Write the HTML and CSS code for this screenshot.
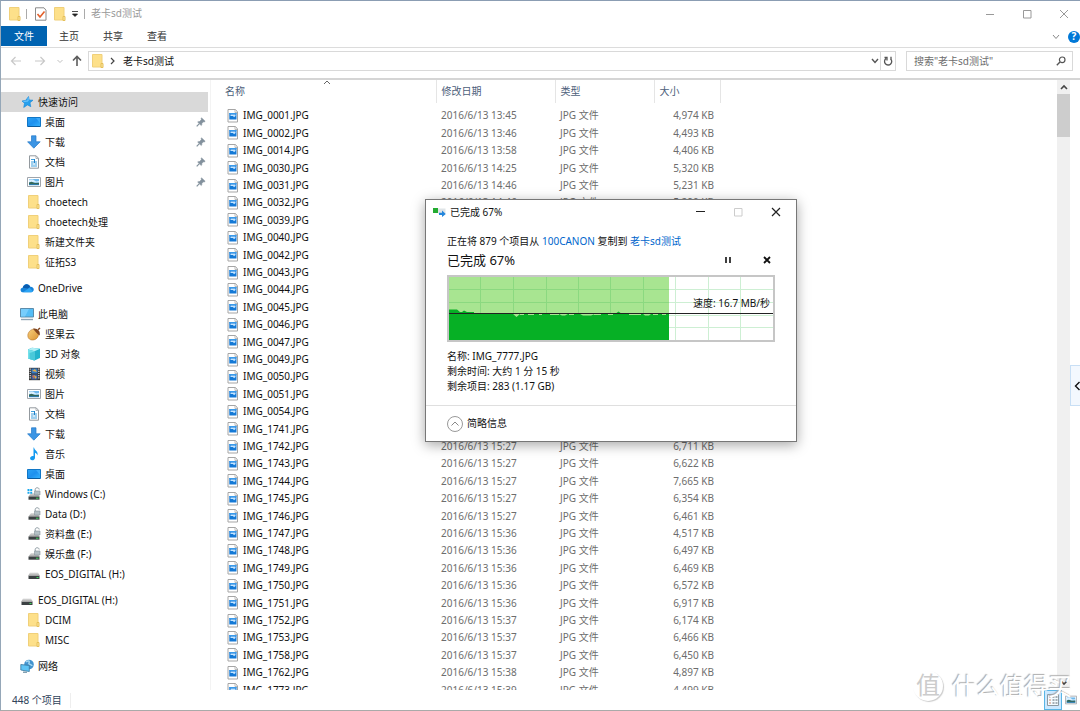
FILE: index.html
```html
<!DOCTYPE html>
<html lang="zh-CN">
<head>
<meta charset="utf-8">
<title>老卡sd测试</title>
<link rel="stylesheet" href="styles.css">
</head>
<body>
<svg class="sprite" aria-hidden="true">
  <defs>
    <linearGradient id="gBlue" x1="0" y1="0" x2="1" y2="1"><stop offset="0" stop-color="#2ba4f5"/><stop offset=".5" stop-color="#1e90ee"/><stop offset="1" stop-color="#35b5ff"/></linearGradient>
    <linearGradient id="gNut" x1="0" y1="0" x2="1" y2="1"><stop offset="0" stop-color="#f7cf7c"/><stop offset="1" stop-color="#dc9433"/></linearGradient>
    <linearGradient id="gDrive" x1="0" y1="0" x2="0" y2="1"><stop offset="0" stop-color="#e2e2e2"/><stop offset="1" stop-color="#9d9d9d"/></linearGradient>
  </defs>
  <symbol id="folder" viewBox="0 0 14 14"><path d="M1.500.5h9.500v12.500h-9.500z" fill="#fde08a" stroke="#f0d07a"/><path d="M10 9.500h2v4h-2z" fill="#fbe79f" stroke="#e6c05a"/></symbol>
  <symbol id="star" viewBox="0 0 14 14"><path d="M8.500 1.500l.7 3.500 3.800.2-3 2.500.8 4-3.300-1.800-3.800 2.600.8-4.200L2 6l3.800-.7z" fill="#27a0ed" stroke="#1287d8" stroke-width=".6"/><path d="M8.200 2.500L8 6l-4.500.4" fill="none" stroke="#77caff"/></symbol>
  <symbol id="desktop" viewBox="0 0 14 14"><path d="M.5 2.500h13v9H.5z" fill="url(#gBlue)" stroke="#1177c6"/><path d="M1 11.500h12" stroke="#0b5c9e"/><path d="M9 3h4v5z" fill="#51bbff" opacity=".6"/></symbol>
  <symbol id="download" viewBox="0 0 14 14"><path d="M4.500.8h4.500v6h4.200L6.800 13.200.6 6.800h3.900z" fill="#3c95e4" stroke="#2479c8" stroke-width=".7"/></symbol>
  <symbol id="doc" viewBox="0 0 14 14"><path d="M2.500.8h6.700l2.300 2.500v9.900h-9z" fill="#fff" stroke="#93999e"/><path d="M9 1v2.500h2.500" fill="none" stroke="#93999e" stroke-width=".7"/><path d="M4 4.500h3M4 7h6M4 9h2.500M7.500 9H10M4 11h6" stroke="#3fa0de" stroke-width="1.200"/><path d="M7.500 4v4" stroke="#2081ca"/></symbol>
  <symbol id="picture" viewBox="0 0 14 14"><path d="M.5 2.500h13v9H.5z" fill="#fff" stroke="#a0a5ab"/><path d="M2 4h10v6H2z" fill="#6eb8ec"/><path d="M2 4.500h4l3 2 3-.5v1.500H2z" fill="#d9efff"/><path d="M2 7.500l2.500-.8L8 8l4-.3V10H2z" fill="#36695b"/><path d="M2 9.200h10v1H2z" fill="#2c80be"/></symbol>
  <symbol id="onedrive" viewBox="0 0 14 14"><path d="M3.400 11.300C-.2 11.300-.3 7 2.700 6.800 3.500 2.500 8.600 1.700 10.200 5.800c4.300-.4 4.800 5 1 5.500z" fill="#1683da"/><path d="M2.700 6.800C3.700 3 8.500 2 10.200 5.800L8 7.500z" fill="#0b5cae"/><path d="M3 11.200l6.500-4.500 3.500 3.500c-.5.8-1 1-1.800 1.100z" fill="#2da4f4"/></symbol>
  <symbol id="pc" viewBox="0 0 14 14"><path d="M.5 1.500h13v8.500H.5z" fill="#55bdf6" stroke="#5b8cab"/><path d="M1 2h8L5 9.500H1z" fill="#86d4ff" opacity=".7"/><path d="M1 12.500h12" stroke="#8fa3b3" stroke-width="1.400"/></symbol>
  <symbol id="nut" viewBox="0 0 14 14"><path d="M1 7C2 3.500 5 2 7.500 2.200l3.800 4.500C12 10 9 13 5.500 13 2 13 .3 10.500 1 7z" fill="url(#gNut)" stroke="#b97627" stroke-width=".6"/><path d="M6 1.800C9.500.5 14 4 12.600 8.600 11 7.500 8.500 5 6 1.800z" fill="#814620"/><path d="M11 2.700l2-1.700" stroke="#814620" stroke-width="1.500"/></symbol>
  <symbol id="cube" viewBox="0 0 14 14"><path d="M1 2.500L5 .8l8 1V11l-5.500 2.500L1 11.500z" fill="#24b3cc"/><path d="M1 2.500L5 .8l8 1-5.500 2.400z" fill="#b2eff6"/><path d="M1 2.500l6.500 1.700v9.300l-6.500-2z" fill="#74e0ea"/><path d="M2.500 6l5-1.500v9l-5-1.500z" fill="#49c9da"/></symbol>
  <symbol id="video" viewBox="0 0 14 14"><path d="M2 .8h11v12.400H2z" fill="#373737"/><path d="M4.500 1.500h6v5h-6z" fill="#347bc6"/><path d="M4.500 7.500h6v5h-6z" fill="#3d65a9"/><path d="M5 4l3-2 2 3zM7 8l3 2-2 2z" fill="#e9ae44"/><path d="M5 9l2-1v4z" fill="#cf6b4b"/><path d="M3.200 1.500v11M11.800 1.500v11" stroke="#ddd" stroke-width="1.200" stroke-dasharray="1.200 1"/></symbol>
  <symbol id="music" viewBox="0 0 14 14"><path d="M7 .5c.5 3 4.500 3.500 3.500 8-.5-2-2-2.500-2.500-2.800v5c0 1.500-1.200 2.600-2.800 2.600-3.200 0-2.500-4.200.5-4.200.4 0 .6 0 .8.2V.5z" fill="#149af0"/></symbol>
  <symbol id="usb" viewBox="0 0 14 14"><path d="M3 5.500h8l2 3.500H1z" fill="url(#gDrive)"/><path d="M1.500 9h11v3h-11z" fill="#3c4143"/><path d="M9.500 10.500h2" stroke="#3ad65c"/></symbol>
  <symbol id="drive" viewBox="0 0 14 14"><path d="M4 6h6.500l2 3.500h-11z" fill="url(#gDrive)"/><path d="M1.500 9.500h11v3.200h-11z" fill="#3c4143"/><path d="M9 11.200h2.500" stroke="#3ad65c"/><path d="M8.200 4V2.500c0-2.300 4-2.300 4 0" fill="none" stroke="#8a979f"/><path d="M7.500 4h5.500v4H7.500z" fill="#b5c0c5" stroke="#84929a" stroke-width=".6"/></symbol>
  <symbol id="windrive" viewBox="0 0 14 14"><use href="#drive"/><path d="M.5 2h2v2h-2zM3.200 2h2v2h-2zM.5 4.800h2v2h-2zM3.200 4.800h2v2h-2z" fill="#18a8ee"/></symbol>
  <symbol id="network" viewBox="0 0 14 14"><circle cx="9" cy="5.500" r="4.800" fill="#4394cf"/><path d="M6 3c2-2 4-1 3 1s3 1 3 3" fill="none" stroke="#a6d7f1" stroke-width="1.500"/><path d="M.8 5.500l8.500 1v6l-8.500-1.500z" fill="#5fc4f5" stroke="#38789f" stroke-width=".8"/><path d="M3 13.200h4" stroke="#668ba0" stroke-width="1.200"/></symbol>
  <symbol id="pin" viewBox="0 0 10 10"><path d="M5.500.8l3.700 3.500-1 .7-.6-.2-1.800 1.800c.2 1 0 1.500-.5 2L1.600 5c.6-.6 1.200-.7 2-.5l1.800-1.900-.3-.8z" fill="#83919d" stroke="#83919d" stroke-width=".5"/><path d="M3.400 6.600L.7 9.300" stroke="#83919d" stroke-width="1.200"/></symbol>
  <symbol id="jpg" viewBox="0 0 12 14"><path d="M1 .5h7.500L10.500 3v10H1z" fill="#fff" stroke="#a5a5a5"/><path d="M8 1v2.500h2.500" fill="none" stroke="#a5a5a5" stroke-width=".7"/><path d="M2.300 4h7.200v6.500H2.300z" fill="#1479d6"/><path d="M3.500 5.500h5V7L7 8.200 6 7H3.500z" fill="#c4e5ff"/><path d="M2.300 4.500h7.200" stroke="#3a9bec"/></symbol>
</svg>

<div class="window">
  <header class="titlebar">
    <svg class="i14"><use href="#folder"/></svg>
    <span class="rule"></span>
    <button class="bare" aria-label="属性"><svg class="i14" viewBox="0 0 14 14"><path d="M1.500.8h8.500l2 2.400v10H1.500z" fill="#fff" stroke="#8b8b8b"/><path d="M3.500 7l2.500 3 4.500-5.500" fill="none" stroke="#e3602b" stroke-width="1.600"/></svg></button>
    <button class="bare" aria-label="新建文件夹"><svg class="i14"><use href="#folder"/></svg></button>
    <button class="bare custom" aria-label="自定义快速访问工具栏"><svg width="8" height="8" viewBox="0 0 8 8"><path d="M1 1.500h6M1.500 4h5L4 6.500z" fill="#222" stroke="#222" stroke-width=".8"/></svg></button>
    <span class="rule"></span>
    <span class="caption">老卡sd测试</span>
    <div class="winbtns">
      <button aria-label="最小化"><svg width="10" height="10"><path d="M1 5.500h8" stroke="#999"/></svg></button>
      <button aria-label="最大化"><svg width="10" height="10"><path d="M1.500 1.500h7.500v7.500h-7.500z" fill="none" stroke="#999"/></svg></button>
      <button aria-label="关闭"><svg width="10" height="10"><path d="M1 1l8 8M9 1L1 9" stroke="#999"/></svg></button>
    </div>
  </header>

  <nav class="tabs">
    <button class="tab file">文件</button>
    <button class="tab">主页</button>
    <button class="tab">共享</button>
    <button class="tab">查看</button>
    <div class="tabtools">
      <button class="bare" aria-label="展开功能区"><svg width="8" height="6"><path d="M1 1l3 3.500L7 1" fill="none" stroke="#888"/></svg></button>
      <button class="bare help" aria-label="帮助">?</button>
    </div>
  </nav>

  <div class="addressbar">
    <div class="history">
      <button class="bare" aria-label="后退"><svg width="12" height="10"><path d="M11 5H1.500M5.500 1l-4 4 4 4" fill="none" stroke="#c8c8c8" stroke-width="1.200"/></svg></button>
      <button class="bare" aria-label="前进"><svg width="12" height="10"><path d="M1 5h9.500M6.500 1l4 4-4 4" fill="none" stroke="#c8c8c8" stroke-width="1.200"/></svg></button>
      <button class="bare narrow" aria-label="最近浏览的位置"><svg width="6" height="5"><path d="M.5 1L3 3.500 5.500 1" fill="none" stroke="#c0c0c0"/></svg></button>
      <button class="bare narrow" aria-label="上移"><svg width="10" height="12"><path d="M5 11V1.500M1 5.500l4-4 4 4" fill="none" stroke="#5c5c5c" stroke-width="1.600"/></svg></button>
    </div>
    <div class="path">
      <svg class="i14"><use href="#folder"/></svg>
      <svg width="6" height="8"><path d="M1 1l3 3-3 3" fill="none" stroke="#444" stroke-width="1.200"/></svg>
      <button class="bare crumb">老卡sd测试</button>
      <button class="bare drop" aria-label="以前的位置"><svg width="8" height="6"><path d="M1 1l3 3.500L7 1" fill="none" stroke="#555" stroke-width="1.400"/></svg></button>
      <button class="bare refresh" aria-label="刷新"><svg width="10" height="10"><path d="M3 2.500a3.600 3.600 0 1 0 4.500.2M1.500 1.500H4v3M8 .8V4" fill="none" stroke="#555" stroke-width="1.300"/></svg></button>
    </div>
    <div class="search">
      <input type="text" aria-label="搜索" placeholder='搜索"老卡sd测试"'>
      <svg width="10" height="10"><circle cx="6.200" cy="3.800" r="2.800" fill="none" stroke="#555" stroke-width="1.200"/><path d="M4 6L.8 9.200" stroke="#555" stroke-width="1.400"/></svg>
    </div>
  </div>

  <div class="body">
    <nav class="tree">
      <ul>
        <li class="root selected"><svg class="i14"><use href="#star"/></svg>快速访问</li>
        <li><svg class="i14"><use href="#desktop"/></svg>桌面<svg class="pin"><use href="#pin"/></svg></li>
        <li><svg class="i14"><use href="#download"/></svg>下载<svg class="pin"><use href="#pin"/></svg></li>
        <li><svg class="i14"><use href="#doc"/></svg>文档<svg class="pin"><use href="#pin"/></svg></li>
        <li><svg class="i14"><use href="#picture"/></svg>图片<svg class="pin"><use href="#pin"/></svg></li>
        <li><svg class="i14"><use href="#folder"/></svg>choetech</li>
        <li><svg class="i14"><use href="#folder"/></svg>choetech处理</li>
        <li><svg class="i14"><use href="#folder"/></svg>新建文件夹</li>
        <li><svg class="i14"><use href="#folder"/></svg>征拓S3</li>
      </ul>
      <ul>
        <li class="root"><svg class="i14"><use href="#onedrive"/></svg>OneDrive</li>
      </ul>
      <ul>
        <li class="root"><svg class="i14"><use href="#pc"/></svg>此电脑</li>
        <li><svg class="i14"><use href="#nut"/></svg>坚果云</li>
        <li><svg class="i14"><use href="#cube"/></svg>3D 对象</li>
        <li><svg class="i14"><use href="#video"/></svg>视频</li>
        <li><svg class="i14"><use href="#picture"/></svg>图片</li>
        <li><svg class="i14"><use href="#doc"/></svg>文档</li>
        <li><svg class="i14"><use href="#download"/></svg>下载</li>
        <li><svg class="i14"><use href="#music"/></svg>音乐</li>
        <li><svg class="i14"><use href="#desktop"/></svg>桌面</li>
        <li><svg class="i14"><use href="#windrive"/></svg>Windows (C:)</li>
        <li><svg class="i14"><use href="#drive"/></svg>Data (D:)</li>
        <li><svg class="i14"><use href="#drive"/></svg>资料盘 (E:)</li>
        <li><svg class="i14"><use href="#drive"/></svg>娱乐盘 (F:)</li>
        <li><svg class="i14"><use href="#usb"/></svg>EOS_DIGITAL (H:)</li>
      </ul>
      <ul>
        <li class="root"><svg class="i14"><use href="#usb"/></svg>EOS_DIGITAL (H:)</li>
        <li><svg class="i14"><use href="#folder"/></svg>DCIM</li>
        <li><svg class="i14"><use href="#folder"/></svg>MISC</li>
      </ul>
      <ul>
        <li class="root"><svg class="i14"><use href="#network"/></svg>网络</li>
      </ul>
    </nav>

    <main class="files">
      <table>
        <colgroup><col class="c-name"><col class="c-date"><col class="c-type"><col class="c-size"></colgroup>
        <thead>
          <tr><th class="sorted">名称<svg class="caret" width="8" height="5"><path d="M1 4l3-3 3 3" fill="none" stroke="#666"/></svg></th><th>修改日期</th><th>类型</th><th>大小</th></tr>
        </thead>
        <tbody id="rows"></tbody>
      </table>
    </main>

    <div class="scrollbar" aria-hidden="true">
      <svg width="13" height="14"><path d="M4 9l3-3 3 3" fill="none" stroke="#444" stroke-width="1.600"/></svg>
      <span class="thumb"></span>
      <svg class="down" width="13" height="14"><path d="M4 5l3 3 3-3" fill="none" stroke="#444" stroke-width="1.600"/></svg>
    </div>
  </div>

  <footer class="status">
    <span class="count">448 个项目</span>
    <div class="views">
      <button class="active" aria-label="详细信息"><svg width="14" height="14" viewBox="0 0 14 14"><path d="M1.500 1.500h11v11h-11z" fill="#f4fbff" stroke="#8c9aa3"/><path d="M3 4h2M3 7h2M3 10h2" stroke="#d28468"/><path d="M6.500 4h2M9.500 4h2M6.500 7h2M9.500 7h2M6.500 10h2M9.500 10h2" stroke="#56656e"/></svg></button>
      <button aria-label="大图标"><svg width="12" height="12"><use href="#picture"/></svg></button>
    </div>
  </footer>

  <button class="sidetab" aria-label="展开侧栏"><svg width="6" height="10"><path d="M5.500 1l-4 4 4 4" fill="none" stroke="#111" stroke-width="1.400"/></svg></button>

  <div class="watermark"><span class="seal">值</span><span>什么值得买</span></div>

  <section class="dialog" role="dialog" aria-label="已完成 67%">
    <div class="dtitle">
      <svg width="13" height="10" viewBox="0 0 13 10"><path d="M0 1h5v5H0z" fill="#23ab31"/><path d="M5 1.500h7.500v5H5z" fill="#dfe4e7"/><path d="M6 5.800h3V3.500L12.800 7 9 10V8H6z" fill="#2486dc"/></svg>
      <span>已完成 67%</span>
      <div class="winbtns">
        <button aria-label="最小化"><svg width="10" height="10"><path d="M1 4.500h9" stroke="#222"/></svg></button>
        <button aria-label="最大化" disabled><svg width="10" height="10"><path d="M1.500 1.500h7.500v7.500h-7.500z" fill="none" stroke="#ccc"/></svg></button>
        <button aria-label="关闭"><svg width="10" height="10"><path d="M1 1l8 8M9 1L1 9" stroke="#222" stroke-width="1.200"/></svg></button>
      </div>
    </div>
    <div class="dbody">
      <p>正在将 879 个项目从 <a href="#">100CANON</a> 复制到 <a href="#">老卡sd测试</a></p>
      <div class="headline">
        <h2>已完成 67%</h2>
        <button class="bare" aria-label="暂停"><svg width="8" height="8"><path d="M2 1v6M6 1v6" stroke="#111" stroke-width="1.600"/></svg></button>
        <button class="bare" aria-label="取消"><svg width="8" height="8"><path d="M1 1l6 6M7 1L1 7" stroke="#111" stroke-width="1.800"/></svg></button>
      </div>
      <div class="chart">
        <svg viewBox="0 0 324 63" preserveAspectRatio="none">
          <path d="M0 0h220v63H0z" fill="#a8e591"/>
          <path d="M31.500 0v63M64.500 0v63M97.500 0v63M129.500 0v63M161.500 0v63M194.500 0v63M0 12.500h220M0 25.500h220" stroke="#8bd980"/>
          <path d="M226.500 0v63M259.500 0v63M291.500 0v63M220 12.500h104M220 25.500h104M220 38.500h104M220 50.500h104" stroke="#cdefd3"/>
          <path d="M0 32.500H8L11 35H13L15 33.500 18 35H25V37H64L67.500 40 71 37H110L113 38.500H116L119 37H131L134 38.500H142L146 37H166L169.500 34.500 173 37H194L196 38.500H200L202 37H220V63H0z" fill="#06b025"/>
          <path d="M71 37.500h4M79 37.500h6M90 37.500h3M101 37.500h9M120 37.500h5M145 37.500h7M159 37.500h5M180 37.500h12M204 37.500h5M213 37.500h4" stroke="#a8e591"/>
          <path d="M0 36.500h324" stroke="#222"/>
        </svg>
        <span class="speed">速度: 16.7 MB/秒</span>
      </div>
      <p>名称: IMG_7777.JPG</p>
      <p>剩余时间: 大约 1 分 15 秒</p>
      <p>剩余项目: 283 (1.17 GB)</p>
    </div>
    <div class="dfoot">
      <button class="bare less"><svg width="16" height="16"><circle cx="8" cy="8" r="7.500" fill="#fff" stroke="#999"/><path d="M4.500 9.500L8 6l3.500 3.500" fill="none" stroke="#888"/></svg>简略信息</button>
    </div>
  </section>
</div>
<script src="files.js"></script>
</body>
</html>
```

FILE: styles.css
```css
* { box-sizing: border-box; }

body {
  margin: 0;
  font: 10px/15px "Noto Sans", "Noto Sans CJK SC", sans-serif;
  color: #111;
  background: #fff;
}

button, input { font: inherit; color: inherit; }
button { padding: 0; border: 0; background: none; display: flex; align-items: center; justify-content: center; }
p, h2, ul { margin: 0; padding: 0; }
svg { flex: none; display: block; }
.sprite { position: absolute; width: 0; height: 0; }
.i14 { width: 14px; height: 14px; }

.window {
  position: relative;
  height: 100vh;
  display: flex;
  flex-direction: column;
  overflow: hidden;
  border-top: 1px solid #8b9db3;
  border-bottom: 1px solid #a9aaa9;
  border-left: 1px solid #95a7b8;
}

.titlebar { display: flex; align-items: center; height: 25px; padding-left: 7px; flex: none; }
.titlebar .rule { width: 1px; height: 10px; margin: 0 7px 0 4px; background: #aaa; }
.titlebar .bare + .bare { margin-left: 5px; }
.titlebar .bare + .custom { margin-left: 4px; }
.titlebar .custom + .rule { margin: 0 6px 0 5px; }
.caption { color: #999; }
.winbtns { display: flex; margin-left: auto; }
.winbtns button { width: 37px; height: 24px; }
.titlebar .winbtns { margin-right: -2px; }

.tabs { display: flex; flex: none; height: 22px; border-bottom: 1px solid #dcdcdc; color: #333; }
.tab { width: 44px; height: 20px; }
.tab.file { width: 46px; background: #0063b1; color: #fff; }
.tabtools { display: flex; align-items: center; gap: 8px; margin-left: auto; }
.help { width: 12px; height: 12px; border-radius: 50%; background: #0078d7; color: #fff; font-weight: bold; }

.addressbar { display: flex; align-items: center; flex: none; height: 32px; padding: 0 7px 4px 3px; border-bottom: 2px solid #d5d5d5; }
.history { display: flex; width: 84px; }
.history button { width: 24px; }
.history .narrow { width: 15px; }
.history .narrow + .narrow { width: 20px; }
.path { display: flex; align-items: center; flex: 1; height: 20px; border: 1px solid #d9d9d9; padding-left: 2px; }
.path .i14 { margin-right: 5px; }
.crumb { margin-left: 7px; }
.drop { margin-left: auto; width: 10px; }
.refresh { width: 15px; height: 18px; border-left: 1px solid #d9d9d9; }
.search { display: flex; align-items: center; width: 167px; height: 20px; margin-left: 10px; border: 1px solid #d9d9d9; padding: 0 6px 0 7px; }
.search input { flex: 1; min-width: 0; padding: 0; border: 0; outline: 0; background: none; }
.search input::placeholder { color: #6d6d6d; opacity: 1; }

.body { display: flex; flex: 1; min-height: 0; overflow: hidden; }

.tree { width: 210px; flex: none; padding-top: 12px; border-right: 1px solid #f3f3f3; }
.tree ul { list-style: none; margin-bottom: 6px; }
.tree li { display: flex; align-items: center; gap: 4px; height: 20px; margin-right: 2px; padding: 0 2px 0 26px; white-space: nowrap; }
.tree .root { padding-left: 19px; }
.tree .selected { background: #d9d9d9; }
.pin { width: 10px; height: 10px; margin-left: auto; }

.files { flex: 1; min-width: 0; overflow: hidden; padding-left: 9px; }
table { border-collapse: collapse; table-layout: fixed; width: 500px; }
.c-name { width: 216px; }
.c-date { width: 119px; }
.c-type { width: 99px; }
.c-size { width: 66px; }
th, td { padding: 0 0 0 5px; text-align: left; font-weight: normal; white-space: nowrap; }
th { position: relative; height: 23px; border-right: 1px solid #e5e5e5; color: #4c607a; }
.caret { position: absolute; top: 0; left: 48%; }
tbody::before { content: ""; display: block; height: 4px; }
td { height: 17px; line-height: 15px; color: #6d6d6d; }
tr:nth-child(5n+2) td, tr:nth-child(5n+4) td { height: 18px; }
td:first-child { color: #111; padding-left: 7px; }
td:last-child { text-align: right; padding-right: 6px; }
.fname { display: flex; align-items: center; gap: 4px; }
.jpg { width: 12px; height: 14px; }

.scrollbar { display: flex; flex-direction: column; width: 13px; flex: none; margin-right: 10px; background: #f0f0f0; }
.thumb { height: 43px; background: #cdcdcd; }
.scrollbar .down { margin-top: auto; }

.status { display: flex; align-items: center; flex: none; height: 20px; padding-left: 11px; color: #31435b; }
.count { padding-right: 8px; border-right: 1px solid #eee; }
.views { display: flex; margin-left: auto; }
.views button { width: 18px; height: 20px; }
.views .active { background: #cce8ff; border: 1px solid #58b5e6; }

.sidetab { position: absolute; right: 0; top: 364px; width: 10px; height: 41px; padding-left: 2px; border: 1px solid #c8dff5; border-right: 0; background: #f3f8fe; }

.watermark { position: absolute; right: 8px; bottom: 7px; display: flex; align-items: center; gap: 9px; font-size: 24px; line-height: 34px; color: #fff; text-shadow: -1px -1px 1px #aaa; }
.seal { width: 30px; height: 30px; border-radius: 50%; text-align: center; line-height: 28px; box-shadow: 1px 1px 1px #ccc; color: #ccc; text-shadow: none; }

.dialog { position: absolute; left: 424px; top: 198px; width: 372px; border: 1px solid #777; background: #fff; box-shadow: 0 3px 12px rgba(0, 0, 0, .35); }
.dtitle { display: flex; align-items: center; gap: 4px; height: 24px; padding: 0 1px 0 7px; }
.dtitle .winbtns button { width: 38px; }
.dbody { padding: 10px 21px 11px; }
.dbody a { color: #0066cc; text-decoration: none; }
.headline { display: flex; align-items: center; height: 21px; }
.headline h2 { flex: 1; font-size: 13px; line-height: 20px; font-weight: normal; }
.headline button { width: 16px; height: 16px; }
.headline button + button { margin-left: 23px; }
.chart { position: relative; height: 67px; margin: 5px 0 7px; border: 2px solid #c6c6c6; }
.chart svg { width: 100%; height: 100%; }
.speed { position: absolute; right: 3px; top: 19px; }
.dfoot { height: 36px; display: flex; align-items: center; padding-left: 21px; border-top: 1px solid #dfdfdf; }
.less { gap: 4px; }
```

FILE: files.js
```js
const covered = ["0039", "0040", "0042", "0043", "0044", "0045", "0046", "0047", "0049", "0050", "0051", "0054", "1741"];

const files = [
  ["0001", "13:45", "4,974"], ["0002", "13:46", "4,493"], ["0014", "13:58", "4,406"],
  ["0030", "14:25", "5,320"], ["0031", "14:46", "5,231"], ["0032", "14:46", "5,290"],
  ...covered.map(id => [id]),
  ["1742", "15:27", "6,711"], ["1743", "15:27", "6,622"],
  ["1744", "15:27", "7,665"], ["1745", "15:27", "6,354"], ["1746", "15:27", "6,461"],
  ["1747", "15:36", "4,517"], ["1748", "15:36", "6,497"], ["1749", "15:36", "6,469"],
  ["1750", "15:36", "6,572"], ["1751", "15:36", "6,917"], ["1752", "15:37", "6,174"],
  ["1753", "15:37", "6,466"], ["1758", "15:37", "6,450"], ["1762", "15:38", "4,897"],
  ["1773", "15:39", "4,499"]
];

document.getElementById("rows").innerHTML = files.map(([id, time, size]) => `
  <tr>
    <td><span class="fname"><svg class="jpg"><use href="#jpg"/></svg>IMG_${id}.JPG</span></td>
    <td>${time ? "2016/6/13 " + time : ""}</td>
    <td>${time ? "JPG 文件" : ""}</td>
    <td>${size ? size + " KB" : ""}</td>
  </tr>`).join("");
```
